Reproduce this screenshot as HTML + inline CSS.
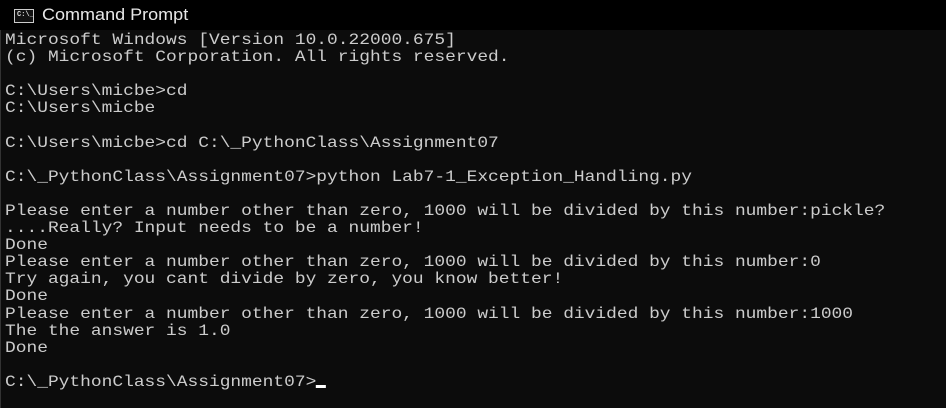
<!DOCTYPE html>
<html><head><meta charset="utf-8"><style>
html,body{margin:0;padding:0;background:#0c0c0c;width:946px;height:408px;overflow:hidden}
.title{position:absolute;left:0;top:0;width:946px;height:30px;background:#000;}
.title .t{position:absolute;left:42px;top:5px;color:#e8e8e8;font:17px "Liberation Sans",sans-serif;transform:scaleX(1.06);transform-origin:0 0}
.icon{position:absolute;left:14px;top:9px;width:18px;height:12px;border:1px solid #ccc;background:#111;}
.icon span{position:absolute;left:2px;top:1px;color:#ddd;font:bold 7px "Liberation Mono",monospace;}
.con{position:absolute;left:0;top:30px;width:946px;height:378px;background:#0c0c0c;border-left:1px solid #333;box-sizing:border-box}
pre{position:absolute;left:4px;top:2px;margin:0;color:#cccccc;font:16px/17.1px "Liberation Mono",monospace;transform:scaleX(1.118);transform-origin:0 0;}
.cur{display:inline-block;width:9px;height:3px;background:#fff;vertical-align:-2px}
</style></head><body>
<div class="title"><div class="icon"><span>C:\_</span></div><div class="t">Command Prompt</div></div>
<div class="con"><pre>Microsoft Windows [Version 10.0.22000.675]
(c) Microsoft Corporation. All rights reserved.

C:\Users\micbe&gt;cd
C:\Users\micbe

C:\Users\micbe&gt;cd C:\_PythonClass\Assignment07

C:\_PythonClass\Assignment07&gt;python Lab7-1_Exception_Handling.py

Please enter a number other than zero, 1000 will be divided by this number:pickle?
....Really? Input needs to be a number!
Done
Please enter a number other than zero, 1000 will be divided by this number:0
Try again, you cant divide by zero, you know better!
Done
Please enter a number other than zero, 1000 will be divided by this number:1000
The the answer is 1.0
Done

C:\_PythonClass\Assignment07&gt;<span class="cur"></span></pre></div>
</body></html>
